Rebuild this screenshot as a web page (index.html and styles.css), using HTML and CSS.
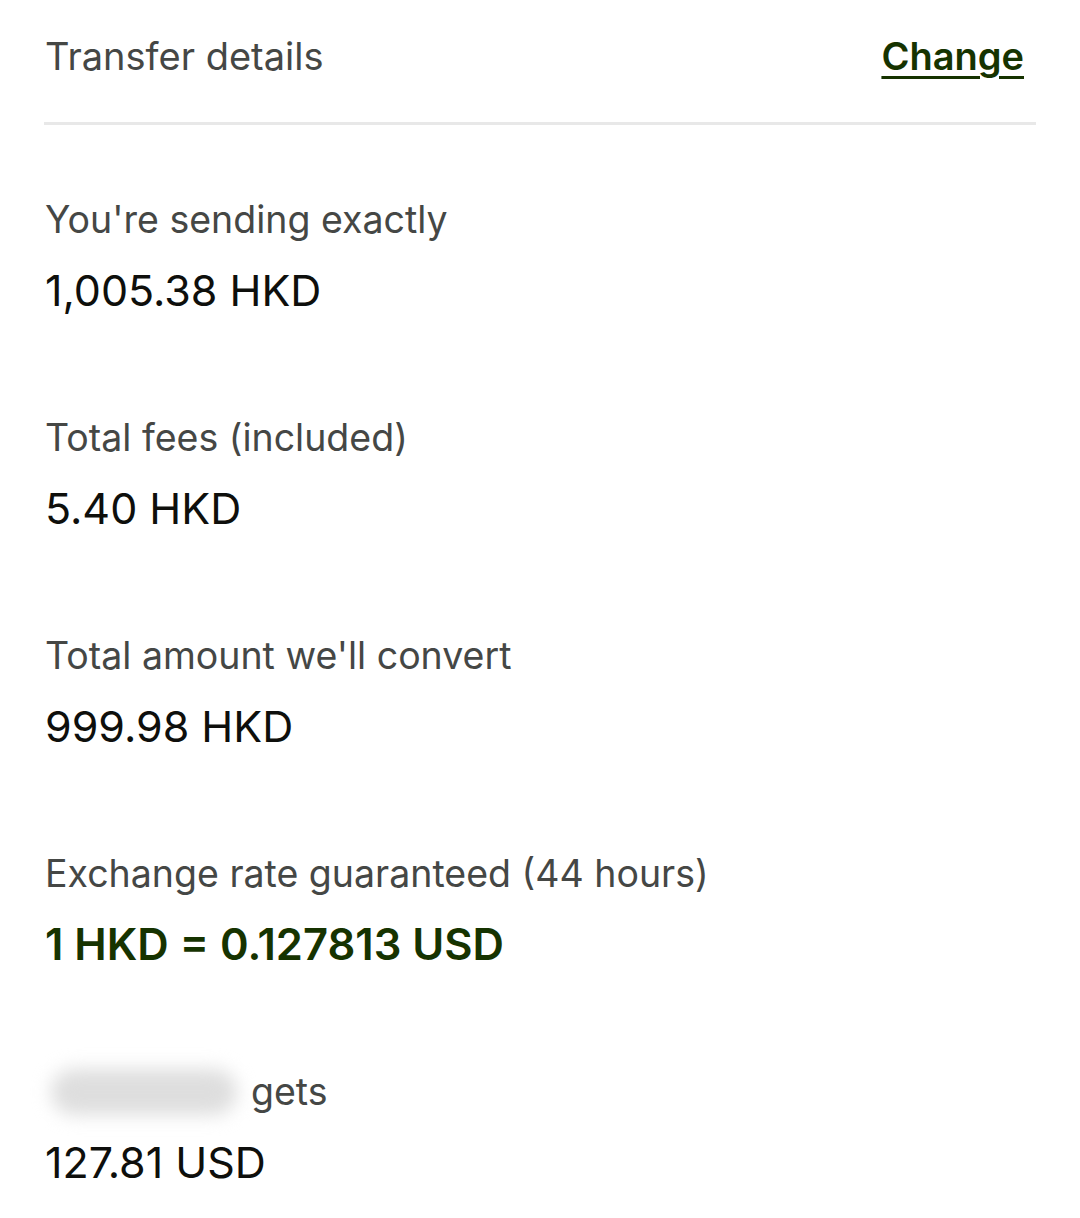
FILE: index.html
```html
<!DOCTYPE html>
<html>
<head>
<meta charset="utf-8">
<link rel="stylesheet" href="styles.css">
</head>
<body>
<div class="page">
  <header class="head">
    <h1 class="title">Transfer details</h1>
    <a class="change" href="#">Change</a>
  </header>
  <div class="rule"></div>
  <dl class="list">
    <div class="item">
      <dt class="label">You're sending exactly</dt>
      <dd class="value">1,005.38 HKD</dd>
    </div>
    <div class="item">
      <dt class="label">Total fees (included)</dt>
      <dd class="value">5.40 HKD</dd>
    </div>
    <div class="item">
      <dt class="label">Total amount we'll convert</dt>
      <dd class="value">999.98 HKD</dd>
    </div>
    <div class="item">
      <dt class="label">Exchange rate guaranteed (44 hours)</dt>
      <dd class="value rate">1 HKD = 0.127813 USD</dd>
    </div>
    <div class="item">
      <dt class="label"><span class="redact" aria-hidden="true"></span>gets</dt>
      <dd class="value">127.81 USD</dd>
    </div>
  </dl>
</div>
</body>
</html>
```
FILE: styles.css
```css
html, body {
  margin: 0;
  padding: 0;
  background: #ffffff;
}
body {
  font-family: Inter, "Noto Sans", sans-serif;
  width: 1080px;
  height: 1218px;
  overflow: hidden;
}
.page {
  padding: 0 44px;
}
.head {
  display: flex;
  justify-content: space-between;
  align-items: center;
  height: 112px;
  padding: 0 12px 10px 1px;
}
.title {
  margin: 0;
  font-size: 38px;
  font-weight: 400;
  color: #454745;
}
.change {
  font-size: 38px;
  font-weight: 600;
  color: #163300;
  text-decoration: underline;
  text-decoration-thickness: 3px;
  text-underline-offset: 6px;
}
.rule {
  height: 3px;
  background: #e8e8e8;
}
.list {
  margin: 0;
  padding: 71px 0 0 1px;
  display: flex;
  flex-direction: column;
  gap: 100px;
}
.item {
  display: flex;
  flex-direction: column;
  gap: 22px;
}
.label {
  font-size: 37.5px;
  color: #454745;
  line-height: 48px;
  display: flex;
  align-items: center;
}
.value {
  margin: 0;
  font-size: 43px;
  color: #0e0f0c;
  line-height: 48px;
}
.rate {
  font-size: 43.5px;
  font-weight: 600;
  color: #163300;
}
.redact {
  display: block;
  background: #dedede;
  border-radius: 24px;
  filter: blur(9px);
  width: 186px;
  height: 46px;
  margin: 0 14px 0 6px;
}
```
